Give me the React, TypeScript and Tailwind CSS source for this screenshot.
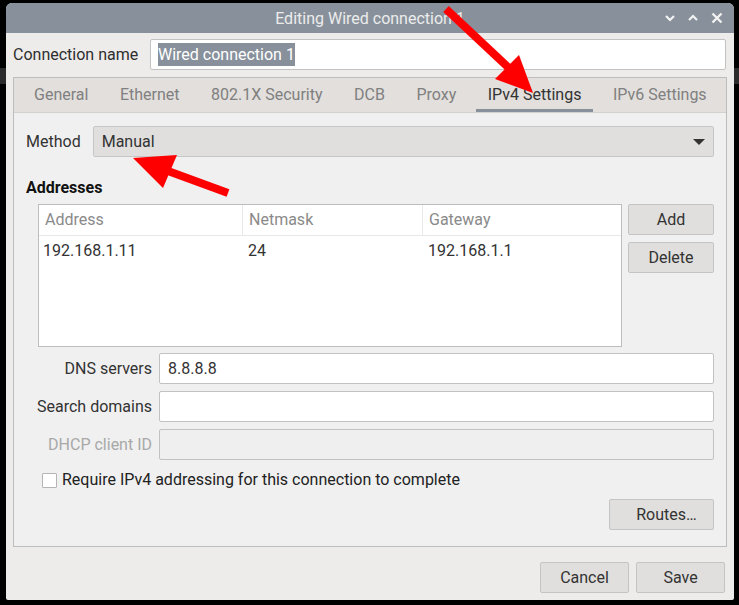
import React from "react";

const font = { fontFamily: "Roboto, 'Noto Sans', 'Liberation Sans', sans-serif" };

function Btn({ children, className = "" }: { children: React.ReactNode; className?: string }) {
  return (
    <div
      className={
        "flex shrink-0 items-center justify-center h-[31px] bg-[#e0dfdd] border border-[#c4c4c4] rounded-[2px] text-[#333] text-[16px] " +
        className
      }
    >
      {children}
    </div>
  );
}

export default function App() {
  const tabs = ["General", "Ethernet", "802.1X Security", "DCB", "Proxy", "IPv4 Settings", "IPv6 Settings"];
  return (
    <div className="relative w-[739px] h-[605px] bg-black overflow-hidden" style={font}>
      <div className="absolute left-0 top-[68px] w-[6px] h-[16px] bg-[#2b2b2b]" />
      <div className="absolute right-0 top-[68px] w-[5px] h-[16px] bg-[#2b2b2b]" />
      <div className="ml-[6px] pt-[3px]">
        <div className="w-[728px] h-[597px] rounded-t-[6px] rounded-b-[2px] bg-[#edeceb] overflow-hidden flex flex-col">
          {/* title bar */}
          <div className="h-[30px] shrink-0 bg-[#88919b] grid grid-cols-[1fr_auto_1fr] items-center">
            <div />
            <div className="text-[16px] text-[#ececec] pt-[1px]">Editing Wired connection 1</div>
            <div className="flex justify-end items-center gap-[9px] pr-[9px]">
              <svg width="14" height="14" viewBox="0 0 14 14">
                <polyline points="3,5 7,9 11,5" fill="none" stroke="#f2f2f2" strokeWidth="2.2" />
              </svg>
              <svg width="14" height="14" viewBox="0 0 14 14">
                <polyline points="3,9 7,5 11,9" fill="none" stroke="#f2f2f2" strokeWidth="2.2" />
              </svg>
              <svg width="16" height="16" viewBox="0 0 16 16">
                <path d="M3.5 3.5 L12.5 12.5 M12.5 3.5 L3.5 12.5" fill="none" stroke="#f2f2f2" strokeWidth="2.4" />
              </svg>
            </div>
          </div>

          {/* connection name */}
          <div className="flex shrink-0 items-center mt-[6px] pl-[7px] pr-[8px]">
            <div className="w-[137px] text-[16px] text-[#2e2e2e] whitespace-nowrap">Connection name</div>
            <div className="flex-1 h-[31px] bg-white border border-[#c2c2c2] rounded-[2px] flex items-center pl-[7px]">
              <span className="bg-[#88919b] text-white text-[16px] leading-[23px]">Wired connection 1</span>
            </div>
          </div>

          {/* notebook */}
          <div className="mx-[7px] mt-[7px] h-[470px] shrink-0 border border-[#bdbdbd] flex flex-col overflow-hidden">
            <div className="h-[35px] shrink-0 bg-[#e2dfdc] border-b border-[#d3d1ce] flex pl-[8px] gap-[7.5px]">
              {tabs.map((t) => (
                <div
                  key={t}
                  className={
                    "px-[12px] flex items-center whitespace-nowrap text-[16px] border-b-[3px] pt-[3px] " +
                    (t === "IPv4 Settings" ? "border-[#88919b] text-[#333]" : "border-transparent text-[#808080]")
                  }
                >
                  {t}
                </div>
              ))}
            </div>
            <div className="flex-1 bg-[#f0f0f0] px-[12px] pt-[13px] flex flex-col">
              {/* method */}
              <div className="flex shrink-0 items-center gap-[12px]">
                <div className="text-[16px] text-[#333]">Method</div>
                <div className="flex-1 h-[31px] bg-[#e0dfdd] border border-[#c6c6c6] rounded-[2px] flex items-center justify-between pl-[8px] pr-[8px]">
                  <span className="text-[16px] text-[#333]">Manual</span>
                  <svg width="12" height="8" viewBox="0 0 12 8">
                    <polygon points="0,1 12,1 6,7" fill="#333" />
                  </svg>
                </div>
              </div>
              <div className="mt-[21px] shrink-0 text-[16px] leading-[20px] font-bold text-[#111]">Addresses</div>
              <div className="flex shrink-0 mt-[6px] pl-[12px] gap-[6px]">
                <div className="w-[584px] h-[143px] bg-white border border-[#bdbdbd] flex flex-col">
                  <div className="flex h-[31px] border-b border-[#e8e8e8] text-[16px] text-[#8a8a8a]">
                    <div className="w-[204px] pl-[6px] flex items-center border-r border-[#e8e8e8]">Address</div>
                    <div className="w-[180px] pl-[6px] flex items-center border-r border-[#e8e8e8]">Netmask</div>
                    <div className="flex-1 pl-[6px] flex items-center">Gateway</div>
                  </div>
                  <div className="flex h-[29px] text-[16px] text-[#333]">
                    <div className="w-[204px] pl-[4px] flex items-center">192.168.1.11</div>
                    <div className="w-[180px] pl-[5px] flex items-center">24</div>
                    <div className="flex-1 pl-[5px] flex items-center">192.168.1.1</div>
                  </div>
                </div>
                <div className="flex-1 flex flex-col gap-[7px]">
                  <Btn>Add</Btn>
                  <Btn>Delete</Btn>
                </div>
              </div>

              {/* dns etc */}
              <div className="mt-[6px] shrink-0 pl-[12px] flex flex-col gap-[7px]">
                {[
                  { l: "DNS servers", v: "8.8.8.8", dis: false },
                  { l: "Search domains", v: "", dis: false },
                  { l: "DHCP client ID", v: "", dis: true },
                ].map((r) => (
                  <div key={r.l} className="flex items-center gap-[7px]">
                    <div className="w-[114px] shrink-0 flex justify-end">
                      <span
                        className={
                          "shrink-0 whitespace-nowrap text-[16px] " + (r.dis ? "text-[#a8a8a8]" : "text-[#333]")
                        }
                      >
                        {r.l}
                      </span>
                    </div>
                    <div
                      className={
                        "flex-1 h-[31px] border border-[#c2c2c2] rounded-[2px] flex items-center pl-[8px] text-[16px] text-[#333] " +
                        (r.dis ? "bg-[#efefef]" : "bg-white")
                      }
                    >
                      {r.v}
                    </div>
                  </div>
                ))}
              </div>

              <div className="mt-[8px] shrink-0 pl-[16px] flex items-center gap-[5px]">
                <div className="w-[15px] h-[15px] bg-white border border-[#b5b5b5] rounded-[1px]" />
                <span className="text-[16px] text-[#222] whitespace-nowrap">
                  Require IPv4 addressing for this connection to complete
                </span>
              </div>

              <div className="mt-[7px] shrink-0 flex justify-end">
                <Btn className="w-[105px] pl-[10px]">Routes…</Btn>
              </div>
            </div>
          </div>

          <div className="mt-[15px] shrink-0 flex justify-end gap-[7px] pr-[9px]">
            <Btn className="w-[89px]">Cancel</Btn>
            <Btn className="w-[89px]">Save</Btn>
          </div>
        </div>
      </div>

      {/* red arrows */}
      <svg className="absolute inset-0 pointer-events-none" width="739" height="605" viewBox="0 0 739 605">
        <line x1="446" y1="9" x2="510" y2="69" stroke="#ff0000" strokeWidth="8" />
        <polygon points="533,93 519,55 495,79" fill="#ff0000" />
        <line x1="228" y1="193" x2="168" y2="171" stroke="#ff0000" strokeWidth="8" />
        <polygon points="133,158 177,155 163,188" fill="#ff0000" />
      </svg>
    </div>
  );
}
